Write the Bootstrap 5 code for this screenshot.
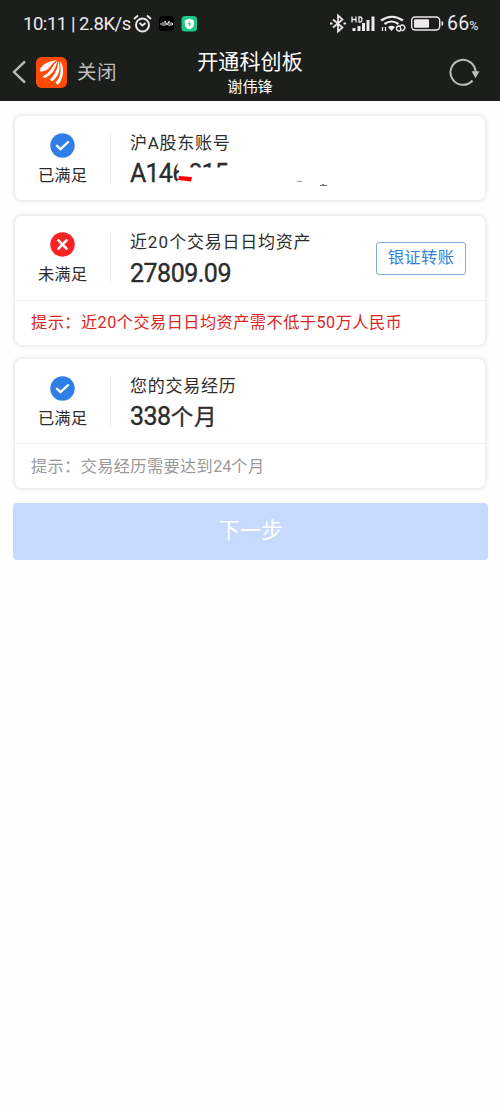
<!DOCTYPE html>
<html lang="zh-CN">
<head>
<meta charset="utf-8">
<meta name="viewport" content="width=device-width, initial-scale=1">
<title>开通科创板</title>
<link href="https://cdn.jsdelivr.net/npm/bootstrap@5.3.0/dist/css/bootstrap.min.css" rel="stylesheet">
<style>
body{font-family:Roboto,"Noto Sans CJK SC",sans-serif;background:#fffeff;color:#2c2c2c;line-height:1}
.top-area{background:#1b1e1b;height:101px;color:#fff}
.status-bar{height:47px;padding-left:23px;color:#eee9ed}
.status-bar svg,.title-bar svg,.state svg{display:block;flex:none}
.clock{font-size:18.5px;width:109px;padding-top:1px;white-space:nowrap;letter-spacing:-.46px}
.battery-text{font-size:19.5px;width:54px;padding:1px 0 0 1px;letter-spacing:.2px;white-space:nowrap}
.battery-text span{font-size:12.5px}
.title-bar{height:54px}
.page-title{font-size:21px;letter-spacing:.15px;line-height:24px;margin-top:3px}
.page-user{font-size:15.2px;line-height:20px;margin-top:3px}
.close-text{font-size:19.5px;color:#bdbdbd;letter-spacing:.4px;margin:2px 0 0 10px}
.title-left{width:150px;padding-left:12px}
.title-right{width:150px;padding-right:20px}
.cond{border:0;border-radius:7px;background:#fff;box-shadow:0 0 4px 1px #e4dfe2;margin:0 15px}
.cond-main{height:84px}
.state{width:95px;height:84px;padding-top:17px}
.state-text{font-size:16.3px;letter-spacing:.1px;line-height:20px;margin-top:8px}
.rule{width:1px;height:51px;background:#ededed}
.info{padding:17px 0 0 19px;height:84px}
.label-text{font-size:17px;letter-spacing:.75px;line-height:20px;white-space:nowrap}
.label-text .latin{letter-spacing:1.2px}
.value-text{font-size:25px;font-weight:400;-webkit-text-stroke:.35px #2c2c2c;line-height:30px;margin-top:6px;letter-spacing:-.5px;white-space:nowrap}
.account{letter-spacing:-.75px}
.account .masked{letter-spacing:-1px;margin-left:3px}
.unit{font-size:22.5px;letter-spacing:.8px}
.eraser{left:38px;top:0;-webkit-text-stroke:0}
.hint{height:44.5px;padding:1px 16px 0;border-top:1px solid #f0f0f0;font-size:16.2px;letter-spacing:.45px;white-space:nowrap}
.hint-red{color:#db2524}.hint-gray{color:#999;letter-spacing:.37px;padding-top:2px}
.latin{letter-spacing:.5px}
.hint-gray .latin{letter-spacing:0}
.transfer{width:90px;height:33px;padding:0;border:1px solid #7fadd7;border-radius:3px;color:#307fdc;font-size:16.3px;letter-spacing:.4px;margin-right:19px}
.next{margin:15px 12px 0 13px;width:475px;height:57px;border:0;border-radius:4px;background:#c6daff;color:#fff;font-size:21.3px;padding:0}
</style>
</head>
<body>
<header class="top-area">
<div class="status-bar d-flex align-items-center">
<span class="clock">10:11 | 2.8K/s</span>
<svg width="70" height="24" viewBox="132 12 70 24" fill="none" stroke="#eee9ed">
<circle cx="142.500" cy="25" r="6.500" stroke-width="2"/><path d="M134 19l4-3.500M151 19l-4-3.500M139.500 23l3 2.500 3-2.500" stroke-width="1.800"/>
<rect x="159" y="16" width="15" height="15" rx="3" fill="#000" stroke="none"/><path d="M161 23v2M163 22v4M165 26v-5l2 4 2-4v5M171 22v4M172.500 23v2" stroke-width="1"/>
<rect x="181.500" y="16" width="15.500" height="15.500" rx="3.500" fill="#1bc789" stroke="none"/><path d="M189.300 18.500l4.500 1.700v4.300c0 2.500-2 4-4.500 5-2.500-1-4.500-2.500-4.500-5v-4.300z" fill="#fff" stroke="none"/><path d="M190 20.500l-2.500 3.700h1.800l-.6 3 2.500-3.700h-1.800z" fill="#1bc789" stroke="none"/>
</svg>
<svg class="ms-auto" width="117" height="24" viewBox="329 12 117 24" fill="none" stroke="#eee9ed">
<path d="M333 19.500l9.500 8-4.500 4V15.500l4.500 4-9.500 8" stroke-width="1.700"/><path d="M330 23.500h2.500M343.500 23.500h2.500" stroke-width="2.200"/>
<path d="M352 16.500v6M352 19.500h4M356 16.500v6M359 17v5h1c2.600 0 2.600-5 0-5z" stroke-width="1.300"/>
<path d="M354 28v3M359 26v5M363.500 23v8M368 20v11M373 16.500v14.500" stroke-width="3"/>
<path d="M381 20.500q11-7.500 22 0M384.500 24q7-5 14 0" stroke-width="2.200"/>
<path d="M388 27q3.500-2.500 7 0l-3.500 4z" fill="#eee9ed" stroke="none"/>
<path d="M382.500 31v-4M385.500 27v4" stroke-width="1.300"/><path d="M400.500 26h-1.500a2.300 2.300 0 0 0 0 5h.5q2-.5 1-3t1.500-3h.5a2.800 2.800 0 0 1 0 5.500h-1" stroke-width="1.400"/>
<rect x="411.700" y="17" width="28" height="13" rx="3.500" stroke-width="1.400"/><rect x="414" y="19.300" width="15" height="8.400" rx="1" fill="#eee9ed" stroke="none"/><path d="M442.300 21.500v4" stroke-width="1.600"/>
</svg>
<span class="battery-text">66<span>%</span></span>
</div>
<div class="title-bar d-flex justify-content-between align-items-start">
<div class="title-left d-flex align-items-center h-100" style="padding-bottom:4px">
<svg width="15" height="24" viewBox="0 0 15 24" fill="none" stroke="#bdbdbd" stroke-width="2.400"><path d="M13 1.300L2 12l11 10.700"/></svg>
<svg style="margin-left:9px" width="31" height="31" viewBox="108 36 92 92"><rect x="108" y="36" width="92" height="92" rx="17" fill="#ff4b08"/><path fill="#fff" d="M119 79q0-11 9-18 11-10 42-16-13 9-20 19-9 15-31 15zM128 93q17-8 28-26 6-12 16-20-4 18-13 32-9 13-24 19-5 0-7-5zM150 103q15-15 21-34l4-22q7 26-3 43-8 14-16 18-5-1-6-5zM166 111q13-12 15-33l-1-30q12 21 7 42-4 19-14 28-6-1-7-7z"/></svg>
<span class="close-text text-nowrap">关闭</span>
</div>
<div class="text-center"><div class="page-title">开通科创板</div><div class="page-user">谢伟锋</div></div>
<div class="title-right d-flex align-items-center justify-content-end h-100" style="padding-bottom:4px">
<svg width="31" height="30" viewBox="449 57 31 30"><path d="M472.500 80.500a12.500 12.500 0 1 1 3-8.500" fill="none" stroke="#bdbdbd" stroke-width="2"/><path d="M471.500 71.300h8l-4 7z" fill="#bdbdbd"/></svg>
</div>
</div>
</header>
<main>
<section class="card cond" style="margin-top:15px">
<div class="cond-main d-flex align-items-center">
<div class="state d-flex flex-column align-items-center">
<svg width="25" height="25" viewBox="0 0 25 25"><circle cx="12.500" cy="12.500" r="12.200" fill="#307fe7"/><path d="M6.300 12.200l4.200 4 8.200-7.700" fill="none" stroke="#fff" stroke-width="2.300"/></svg>
<div class="state-text">已满足</div></div>
<div class="rule"></div>
<div class="info flex-grow-1"><div class="label-text">沪A股东账号</div>
<div class="value-text account position-relative">A146<span class="masked">815</span><svg class="eraser position-absolute" width="165" height="30" viewBox="168 159 165 30"><path fill="#fff" d="M180 160h4v6l2 1.500h57v20h-65l-1-6 3-6-1-5-3-2z"/><path fill="#f00" d="M179 176l13 1-1 4.500-13-1.500z"/><path d="M297 181.300h5" stroke="#777" stroke-width=".8"/><path d="M320 185.500h7M322 184.500h2" stroke="#555" stroke-width=".8"/></svg></div></div>
</div>
</section>
<section class="card cond" style="margin-top:16px">
<div class="cond-main d-flex align-items-center">
<div class="state d-flex flex-column align-items-center" style="padding-top:16px">
<svg width="25" height="25" viewBox="0 0 25 25"><circle cx="12.500" cy="12.500" r="12.200" fill="#fb2124"/><path d="M7.700 7.700l9.600 9.600M17.300 7.700l-9.600 9.600" fill="none" stroke="#fff" stroke-width="2.600"/></svg>
<div class="state-text">未满足</div></div>
<div class="rule"></div>
<div class="info flex-grow-1" style="padding-top:16px"><div class="label-text">近<span class="latin">20</span>个交易日日均资产</div><div class="value-text" style="margin-top:7px">27809.09</div></div>
<button class="btn transfer" type="button">银证转账</button>
</div>
<div class="hint hint-red d-flex align-items-center"><span>提示：近<span class="latin">20</span>个交易日日均资产需不低于<span class="latin">50</span>万人民币</span></div>
</section>
<section class="card cond" style="margin-top:14.5px">
<div class="cond-main d-flex align-items-center">
<div class="state d-flex flex-column align-items-center">
<svg width="25" height="25" viewBox="0 0 25 25"><circle cx="12.500" cy="12.500" r="12.200" fill="#307fe7"/><path d="M6.300 12.200l4.200 4 8.200-7.700" fill="none" stroke="#fff" stroke-width="2.300"/></svg>
<div class="state-text">已满足</div></div>
<div class="rule"></div>
<div class="info flex-grow-1"><div class="label-text">您的交易经历</div><div class="value-text">338<span class="unit">个月</span></div></div>
</div>
<div class="hint hint-gray d-flex align-items-center"><span>提示：交易经历需要达到<span class="latin">24</span>个月</span></div>
</section>
<button class="btn next d-block" type="button">下一步</button>
</main>
<script src="https://cdn.jsdelivr.net/npm/bootstrap@5.3.0/dist/js/bootstrap.bundle.min.js"></script>
</body>
</html>
